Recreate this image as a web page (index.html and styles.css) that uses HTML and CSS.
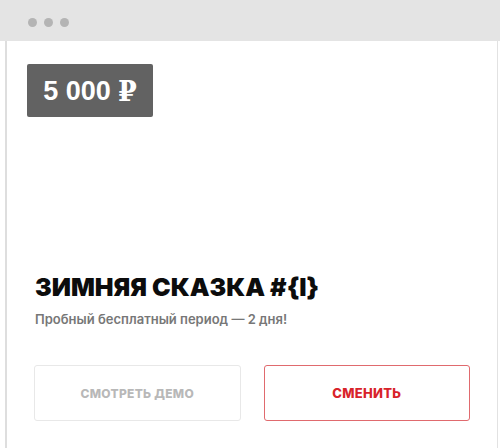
FILE: index.html
```html
<!DOCTYPE html>
<html lang="ru">
<head>
<meta charset="utf-8">
<link rel="stylesheet" href="styles.css">
</head>
<body>
<div class="header">
  <span class="dot"></span><span class="dot"></span><span class="dot"></span>
</div>
<div class="window">
  <div class="content">
    <div class="price">5 000 <span class="rub">₽</span></div>
    <h1 class="title">ЗИМНЯЯ СКАЗКА #{I}</h1>
    <p class="subtitle">Пробный бесплатный период — 2 дня!</p>
    <div class="actions">
      <a class="btn btn-demo">СМОТРЕТЬ ДЕМО</a>
      <a class="btn btn-change">СМЕНИТЬ</a>
    </div>
  </div>
</div>
</body>
</html>
```
FILE: styles.css
```css
html, body {
  margin: 0;
  padding: 0;
  background: #ffffff;
  height: 448px;
  overflow: hidden;
}
body {
  font-family: "Inter", "Open Sans", sans-serif;
}
.header {
  height: 41px;
  background: #e4e4e4;
  display: flex;
  align-items: center;
  gap: 7px;
  padding-left: 28px;
  padding-top: 3px;
  box-sizing: border-box;
}
.dot {
  width: 9px;
  height: 9px;
  border-radius: 50%;
  background: #b4b4b4;
}
.window {
  margin: 0 2px 0 5px;
  border-left: 2px solid #dedede;
  border-right: 1px solid #e2e2e2;
  height: 407px;
}
.content {
  padding: 23px 27px 0 27px;
}
.price {
  margin-left: -7px;
  width: 126px;
  height: 53px;
  box-sizing: border-box;
  background: #626262;
  border-radius: 2px;
  color: #ffffff;
  font-family: "Liberation Sans", Arial, sans-serif;
  font-weight: bold;
  font-size: 27px;
  display: flex;
  align-items: center;
  justify-content: center;
  padding-top: 1px;
}
.rub {
  font-family: "DejaVu Serif", "Liberation Serif", serif;
  margin-left: 7px;
}
.title {
  margin: 155px 0 0 1px;
  font-family: "Inter", sans-serif;
  font-weight: 900;
  font-size: 25px;
  line-height: 30px;
  color: #0c0c0c;
  letter-spacing: 0;
}
.subtitle {
  margin: 8px 0 0 1px;
  font-family: "Inter", sans-serif;
  font-weight: 600;
  font-size: 13px;
  line-height: 18px;
  color: #777777;
}
.actions {
  margin-top: 37px;
  display: grid;
  grid-template-columns: 1fr 1fr;
  gap: 23px;
}
.btn {
  height: 56px;
  box-sizing: border-box;
  border-radius: 3px;
  display: flex;
  align-items: center;
  justify-content: center;
  font-family: "Inter", sans-serif;
  font-weight: 800;
  font-size: 12px;
  letter-spacing: 0.3px;
}
.btn-demo {
  border: 1px solid #e8e8e8;
  color: #b8b8b8;
}
.btn-change {
  border: 1px solid #e06a6e;
  color: #d8232a;
  font-size: 13px;
}
```
